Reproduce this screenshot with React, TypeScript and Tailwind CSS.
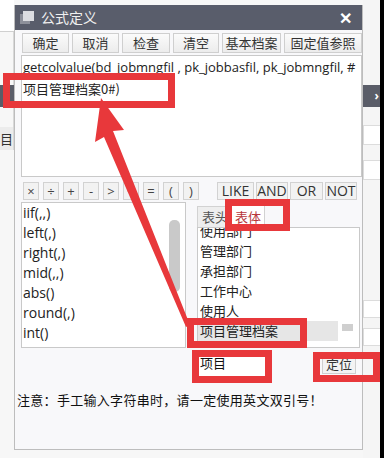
import React from 'react'

const cjk = '"Noto Sans CJK SC", "Open Sans", sans-serif'
const latin = '"Open Sans", "Noto Sans CJK SC", sans-serif'

const toolButtons = [
  { label: '确定', w: 'w-[47px]' },
  { label: '取消', w: 'w-[47px]' },
  { label: '检查', w: 'w-[48px]' },
  { label: '清空', w: 'w-[46px]' },
  { label: '基本档案', w: 'w-[59px]' },
  { label: '固定值参照', w: 'w-[78px]' },
]

const operators = ['×', '÷', '+', '-', '>', '<', '=', '(', ')']
const logic = [
  { label: 'LIKE', w: 'w-[37px]' },
  { label: 'AND', w: 'w-[32px]' },
  { label: 'OR', w: 'w-[33px]' },
  { label: 'NOT', w: 'w-[32px]' },
]

const functions = ['iif(,,)', 'left(,)', 'right(,)', 'mid(,,)', 'abs()', 'round(,)', 'int()']
const fields = ['使用部门', '管理部门', '承担部门', '工作中心', '使用人']

function RedBox({ className }: { className: string }) {
  return <div className={`absolute border-[7px] border-[#e8383b] ${className}`} />
}

export default function App() {
  return (
    <div className="relative w-[384px] h-[458px] overflow-hidden bg-[#f7f7f7] flex" style={{ fontFamily: cjk }}>
      {/* page behind, left side */}
      <div className="w-[14px] shrink-0 flex flex-col">
        <div className="h-[32px] bg-white border-b border-[#d0d0d0]" />
        <div className="h-[53px] border-r border-[#d8d8d8]" />
        <div className="h-[22px] bg-[#5a5d68]" />
        <div className="h-[20px] border-r border-[#d8d8d8]" />
        <div className="h-[23px] bg-[#ececec] border-r border-[#d8d8d8] text-[13px] leading-[23px] text-[#333] overflow-hidden whitespace-nowrap">
          目编
        </div>
      </div>

      {/* dialog */}
      <div className="mt-[5px] w-[349px] h-[445px] shrink-0 border border-[#bdbdbd] border-t-0 bg-[#f8f8fa] flex flex-col">
        <div className="h-[25px] bg-[#595d6b] flex items-center pl-[5px] pr-[10px]">
          <div className="relative w-[14px] h-[13px]">
            <div className="absolute left-0 top-[3px] w-[10px] h-[10px] bg-[#8d909a]" />
            <div className="absolute left-[3px] top-0 w-[11px] h-[10px] bg-[#dcdde1]" />
          </div>
          <span className="ml-[7px] text-[14px] text-[#f0f0f0]">公式定义</span>
          <span className="ml-auto text-[16px] font-bold text-white leading-none" style={{ fontFamily: latin }}>
            ✕
          </span>
        </div>

        <div className="mt-[3px] pl-[7px] flex gap-[3px]">
          {toolButtons.map((b) => (
            <div
              key={b.label}
              className={`${b.w} h-[20px] border border-[#cfcfcf] bg-gradient-to-b from-[#fbfbfb] to-[#ececec] text-[13px] leading-[18px] text-[#333] text-center`}
            >
              {b.label}
            </div>
          ))}
        </div>

        <div className="mt-[2px] ml-[6px] h-[122px] bg-white border border-[#c9c9c9] px-[1px] pt-[1px] text-[13px] leading-[21px] text-[#222]" style={{ fontFamily: latin }}>
          <div className="whitespace-nowrap">getcolvalue(bd_jobmngfil , pk_jobbasfil, pk_jobmngfil, #</div>
          <div style={{ fontFamily: cjk }}>项目管理档案0#)</div>
        </div>

        <div className="mt-[5px] ml-[8px] h-[18px] flex text-[13px] text-[#444]" style={{ fontFamily: latin }}>
          <div className="flex gap-[4px]">
            {operators.map((o) => (
              <div key={o} className="w-[16px] h-[18px] border border-[#d2d2d2] bg-[#f2f2f2] text-center leading-[16px]">
                {o}
              </div>
            ))}
          </div>
          <div className="ml-[18px] flex gap-[2px] text-[14px] text-[#333]">
            {logic.map((l) => (
              <div key={l.label} className={`${l.w} h-[18px] border border-[#d2d2d2] bg-[#f2f2f2] text-center leading-[16px]`}>
                {l.label}
              </div>
            ))}
          </div>
        </div>

        <div className="mt-[2px] ml-[6px] flex">
          <div className="w-[165px] h-[146px] bg-white border border-[#c9c9c9] flex">
            <div className="flex-1 pl-[1px] text-[14px] leading-[20px] text-[#222]" style={{ fontFamily: latin }}>
              {functions.map((f) => (
                <div key={f}>{f}</div>
              ))}
            </div>
            <div className="w-[16px] pt-[17px] pr-[4px]">
              <div className="w-[11px] h-[72px] rounded-[5px] bg-[#c9c9c9]" />
            </div>
          </div>

          <div className="ml-[11px] w-[164px] flex flex-col">
            <div className="mt-[3px] h-[22px] flex items-end text-[13px]">
              <div className="w-[28px] h-[21px] border border-[#d2d2d2] border-b-0 border-r-0 bg-[#eeeeee] text-[#555] leading-[20px] pl-[4px] whitespace-nowrap overflow-hidden">表头</div>
              <div className="w-[40px] h-[22px] border border-[#d2d2d2] border-b-0 bg-white text-[#b8373c] leading-[21px] pl-[9px]">表体</div>
            </div>
            <div className="h-[121px] w-[163px] bg-white border border-[#c9c9c9] overflow-hidden relative text-[13px] leading-[20px] text-[#222]">
              <div className="-mt-[7px] pl-[2px]">
                {fields.map((f) => (
                  <div key={f}>{f}</div>
                ))}
                <div className="bg-[#e6e6e6] -ml-[2px] pl-[2px] w-[140px]">项目管理档案</div>
              </div>
              <div className="absolute right-[6px] top-[96px] w-[11px] h-[7px] bg-[#cfcfcf]" />
            </div>
          </div>
        </div>

        <div className="mt-[4px] ml-[183px] flex items-center">
          <div className="w-[68px] h-[24px] bg-white text-[13px] leading-[22px] text-[#111] pl-[2px]">项目</div>
          <div className="ml-[56px] w-[34px] h-[20px] border border-[#cfcfcf] bg-[#f3f3f3] text-[13px] leading-[18px] text-[#333] text-center">
            定位
          </div>
        </div>

        <div className="mt-[14px] ml-[2px] text-[13px] tracking-[0.3px] text-[#111] whitespace-nowrap">注意：手工输入字符串时，请一定使用英文双引号！</div>
      </div>

      {/* page behind, right side */}
      <div className="w-[17px] shrink-0 flex flex-col bg-[#f5f5f5]">
        <div className="h-[85px]" />
        <div className="h-[22px] bg-[#5a5d68] flex items-center justify-end pr-[1px] text-white text-[12px] font-bold" style={{ fontFamily: latin }}>
          ›
        </div>
        <div className="mt-[18px] h-[20px] bg-white border border-[#dcdcdc] border-r-0" />
        <div className="mt-[15px] h-[20px] bg-white border border-[#dcdcdc] border-r-0" />
        <div className="mt-[120px] h-[18px] bg-white border border-[#dcdcdc] border-r-0" />
        <div className="mt-[10px] h-[18px] bg-white border border-[#dcdcdc] border-r-0" />
      </div>
      <div className="w-[4px] shrink-0 bg-black" />

      {/* annotations */}
      <RedBox className="left-[3px] top-[73px] w-[172px] h-[35px]" />
      <RedBox className="left-[225px] top-[199px] w-[65px] h-[32px]" />
      <RedBox className="left-[187px] top-[318px] w-[120px] h-[30px]" />
      <RedBox className="left-[192px] top-[350px] w-[80px] h-[33px]" />
      <RedBox className="left-[313px] top-[352px] w-[67px] h-[30px]" />
      <svg className="absolute left-0 top-0" width="384" height="458" viewBox="0 0 384 458">
        <polygon points="101,98 95,142 104,137 186,327 190,325 113,131 124,130" fill="#e8383b" />
      </svg>
    </div>
  )
}
